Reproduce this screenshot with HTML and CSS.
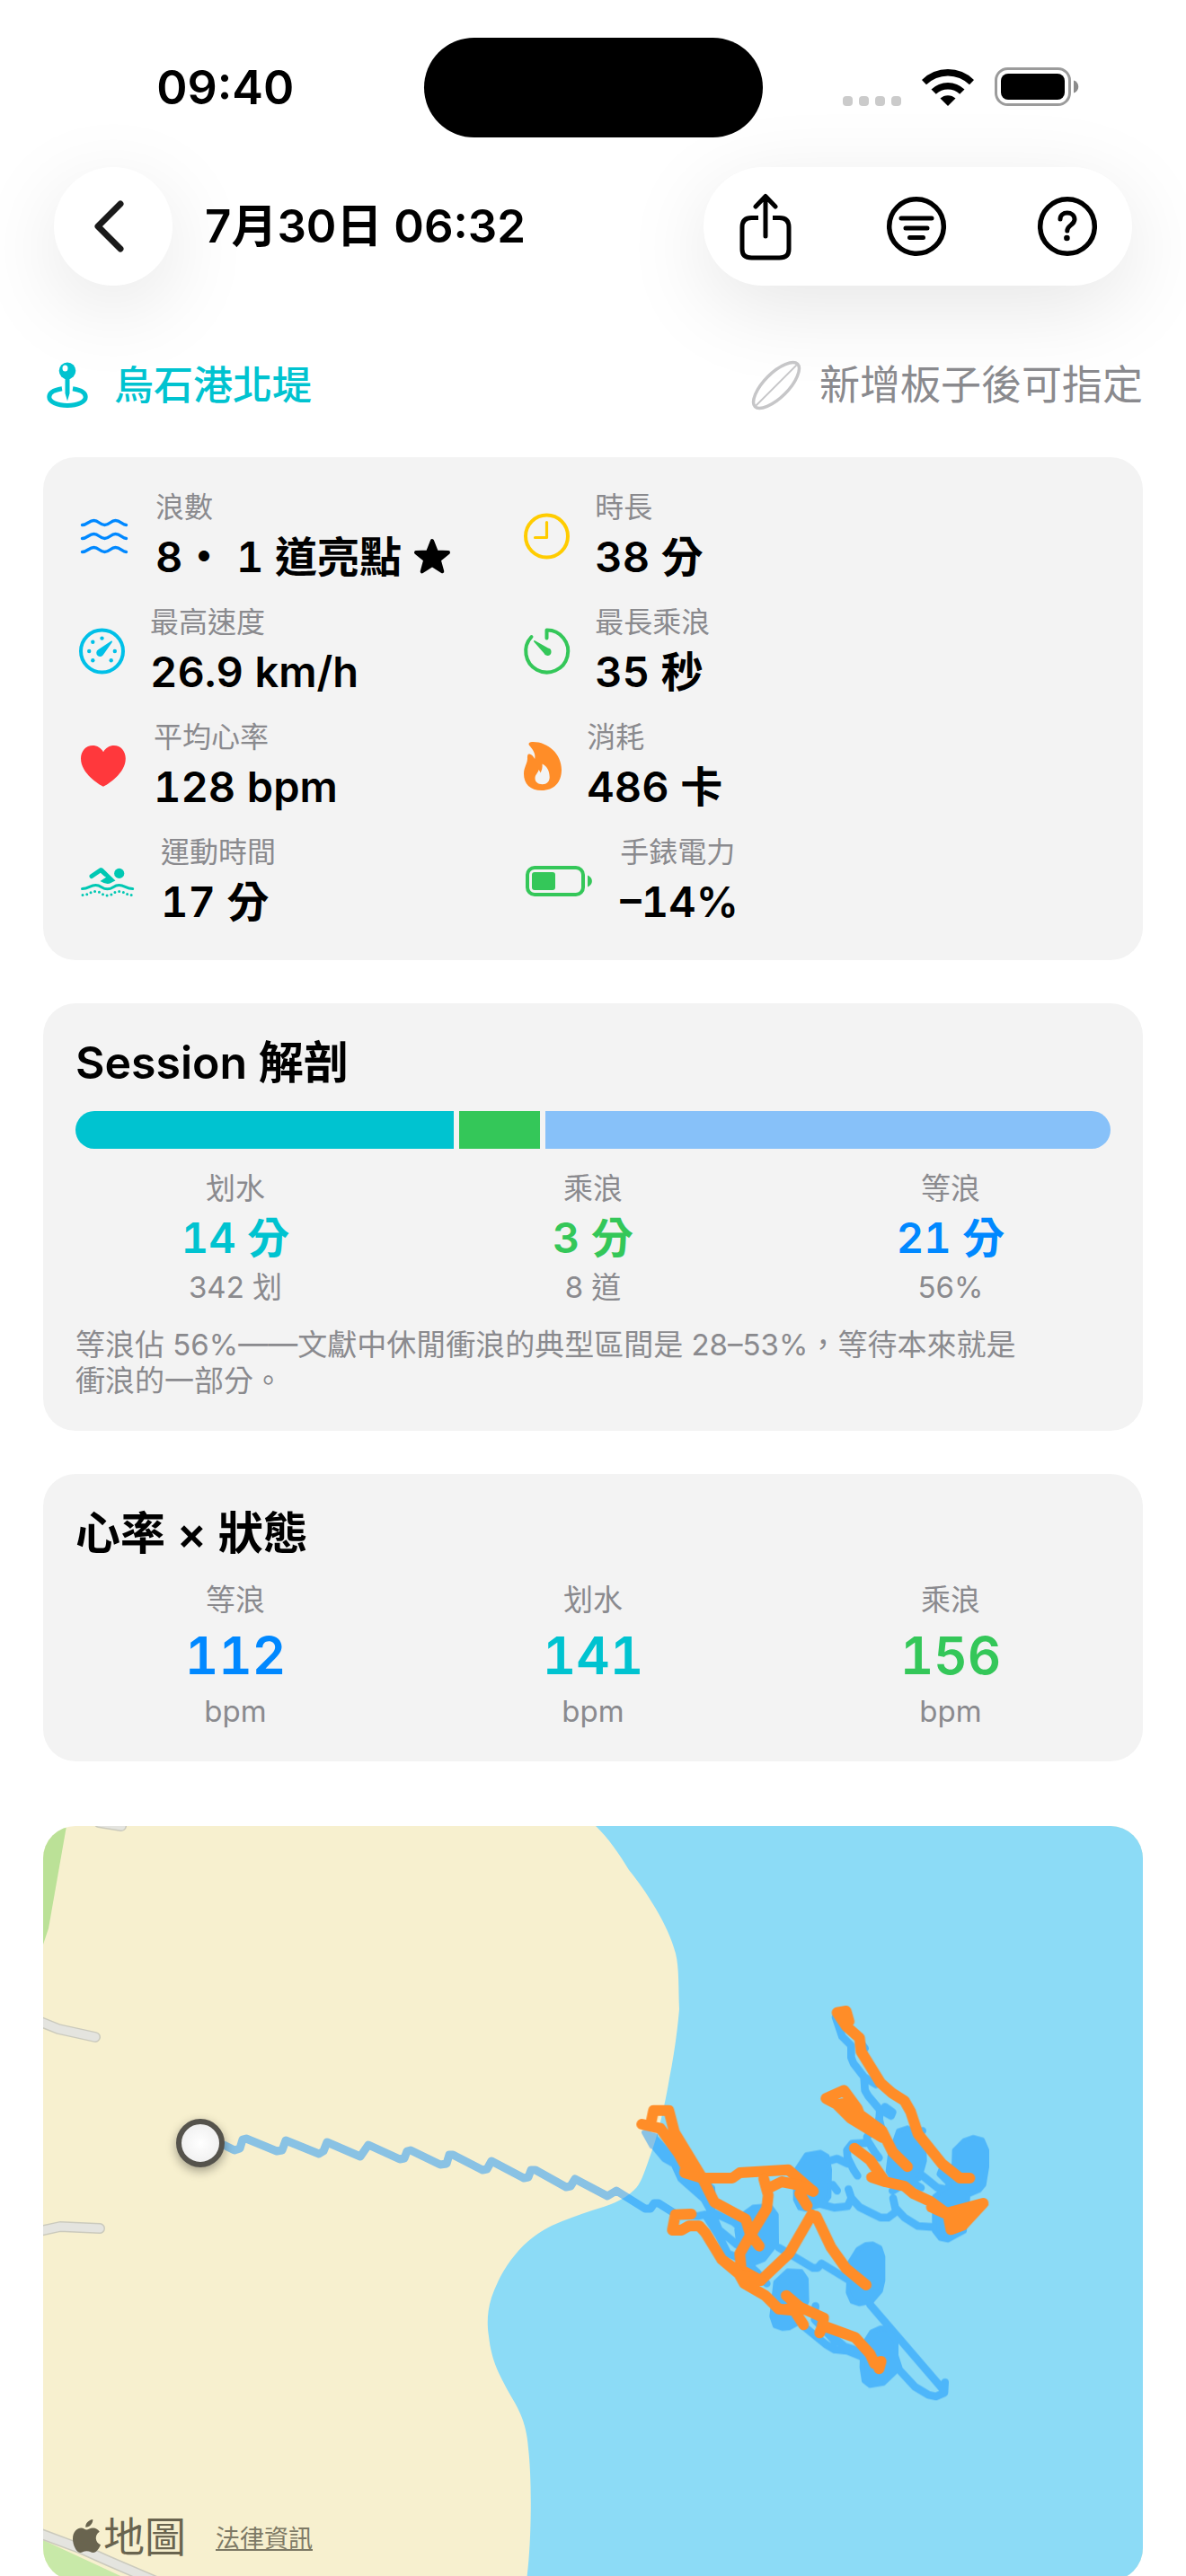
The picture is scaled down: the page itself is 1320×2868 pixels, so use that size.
FILE: index.html
```html
<!DOCTYPE html>
<html lang="zh-Hant">
<head>
<meta charset="utf-8">
<meta name="viewport" content="width=device-width, initial-scale=1">
<title>7月30日 06:32</title>
<link rel="stylesheet" href="styles.css">
</head>
<body>
<div class="screen">
  <div class="status">
    <span class="status-time">09:40</span>
    <span class="island"></span>
    <span class="status-icons">
      <svg width="65" height="42" viewBox="0 0 65 42" fill="#cbcbcb" aria-hidden="true">
        <rect x="0" y="31" width="11" height="11" rx="4"/><rect x="18" y="31" width="11" height="11" rx="4"/><rect x="36" y="31" width="11" height="11" rx="4"/><rect x="54" y="31" width="11" height="11" rx="4"/>
      </svg>
      <svg width="58" height="42" viewBox="0 0 58 42" aria-hidden="true">
        <path d="M0 13a41 41 0 0 1 58 0l-5 5.300a34 34 0 0 0-48 0z"/>
        <path d="M10.500 23.500a26.500 26.500 0 0 1 37 0l-5.300 5.300a19 19 0 0 0-26.400 0z"/>
        <path d="M20.500 33.500a12.500 12.500 0 0 1 17 0L29 42z"/>
      </svg>
      <svg width="94" height="44" viewBox="0 0 94 44" aria-hidden="true">
        <rect x="1.500" y="1.500" width="82" height="40" rx="13" fill="none" stroke="#9b9b9b" stroke-width="3"/>
        <rect x="7" y="7" width="71" height="29" rx="8"/>
        <path d="M88 14.500c7 2 7 12 0 14z" fill="#8b8b8b"/>
      </svg>
    </span>
  </div>

  <header class="header">
    <button class="glass back" type="button" aria-label="返回">
      <svg width="50" height="64" viewBox="0 0 50 64" fill="none" stroke="#1a1a1a" stroke-width="7" stroke-linecap="round" stroke-linejoin="round"><path d="M33 7 8 32l25 25"/></svg>
    </button>
    <h1 class="title">7月30日 06:32</h1>
    <div class="glass tools">
      <button type="button" aria-label="分享">
        <svg width="76" height="76" viewBox="0 0 76 76" fill="none" stroke="#000" stroke-width="5" stroke-linecap="round" stroke-linejoin="round">
          <path d="M30 28.500h-7.500Q12 28.500 12 39v24.500Q12 73 22.500 73h31Q64 73 64 63.500V39q0-10.500-10.500-10.500H46" stroke-linecap="butt"/>
          <path d="M38 49V5M27 16 38 4.500 49 16"/>
        </svg>
      </button>
      <button type="button" aria-label="篩選">
        <svg width="76" height="76" viewBox="0 0 76 76" fill="none" stroke="#000" stroke-width="5" stroke-linecap="round">
          <circle cx="38" cy="38" r="30.300" stroke-width="5.500"/><path d="M21 29h34M26 40h24M30.500 50.500h15"/>
        </svg>
      </button>
      <button type="button" aria-label="說明">
        <svg width="76" height="76" viewBox="0 0 76 76" fill="none" stroke="#000" stroke-width="5" stroke-linecap="round" stroke-linejoin="round">
          <circle cx="38" cy="38" r="30.300" stroke-width="5.500"/><path d="M30 30c0-4.500 3.500-7 7.800-7s8.200 2.600 8.200 7.200c0 6.300-8.200 6.600-8.200 12.800"/><circle cx="37.400" cy="51" r="3.300" fill="#000" stroke="none"/>
        </svg>
      </button>
    </div>
  </header>

  <main class="content">
    <div class="place-row">
      <button class="place" type="button">
        <svg width="50" height="54" viewBox="0 0 50 54" aria-hidden="true">
          <path d="M19 30.800C10 32.200 4.800 35.500 4.800 40c0 5.400 8.700 9.500 20.200 9.500S45.200 45.400 45.200 40c0-4.500-5.200-7.800-14.200-9.200" fill="none" stroke="#00c3d0" stroke-width="5"/>
          <path d="M22.500 19h5v17L25 44.500 22.500 36z" fill="#00c3d0"/><circle cx="25" cy="10.800" r="9.300" fill="#00c3d0"/><ellipse cx="22.500" cy="8" rx="3" ry="3.600" fill="#fff"/>
        </svg>
        <span>烏石港北堤</span>
      </button>
      <button class="board" type="button">
        <svg width="56" height="56" viewBox="0 0 56 56" fill="none" stroke="#c6c6c8" aria-hidden="true">
          <g transform="rotate(45 28 28)"><path d="M28-5.500c7 0 13.500 15 13.500 33.500S35 61.500 28 61.500 14.500 46.500 14.500 28 21-5.500 28-5.500z" stroke-width="3.500"/><path d="M28-4v64" stroke-width="2"/></g>
        </svg>
        <span>新增板子後可指定</span>
      </button>
    </div>

    <section class="card stats">
      <div class="stat">
        <svg width="65" height="60" viewBox="0 0 65 60" fill="none" stroke="#0088ff" stroke-width="3.400" stroke-linecap="round" aria-hidden="true">
          <path d="M7.500 17.500C13 17.500 15 12.500 20.500 12.500S27 17.500 32.500 17.500 39 12.500 44.500 12.500 52 17.500 56.500 17.500"/>
          <path d="M7.500 32.500C13 32.500 15 27.500 20.500 27.500S27 32.500 32.500 32.500 39 27.500 44.500 27.500 52 32.500 56.500 32.500"/>
          <path d="M7.500 47.500C13 47.500 15 42.500 20.500 42.500S27 47.500 32.500 47.500 39 42.500 44.500 42.500 52 47.500 56.500 47.500"/>
        </svg>
        <div class="stat-text"><span class="label">浪數</span>
          <span class="value">8・ 1 道亮點 <svg class="star" width="42" height="42" viewBox="0 0 42 42" aria-hidden="true"><path d="M21 3l4.900 12.500 13.100.6-10.200 8.300 3.500 12.900L21 30 9.700 37.300l3.500-12.900L3 16.100l13.100-.6z" stroke="#000" stroke-width="4" stroke-linejoin="round"/></svg></span></div>
      </div>
      <div class="stat">
        <svg width="59" height="60" viewBox="0 0 59 60" fill="none" stroke="#ffcc00" stroke-linecap="round" stroke-linejoin="round" aria-hidden="true">
          <circle cx="29.500" cy="30" r="23.500" stroke-width="4"/><path d="M29.500 14.500v17H16.500" stroke-width="3.200"/>
        </svg>
        <div class="stat-text"><span class="label">時長</span><span class="value">38 分</span></div>
      </div>
      <div class="stat">
        <svg width="59" height="60" viewBox="0 0 59 60" fill="#00c0e8" aria-hidden="true">
          <circle cx="29.500" cy="30" r="23.500" fill="none" stroke="#00c0e8" stroke-width="4"/>
          <circle cx="29.500" cy="15.600" r="2.200"/><circle cx="19.300" cy="19.800" r="2.200"/><circle cx="15.200" cy="30" r="2.200"/><circle cx="19.300" cy="40.200" r="2.200"/><circle cx="39.700" cy="40.200" r="2.200"/><circle cx="43.800" cy="30" r="2.200"/>
          <path d="M25.300 28.200 39.600 18.700q1.800-.6 1.200 1.200L31.300 33.500a4.200 4.200 0 1 1-6-5.300z"/>
        </svg>
        <div class="stat-text"><span class="label">最高速度</span><span class="value">26.9 km/h</span></div>
      </div>
      <div class="stat">
        <svg width="59" height="60" viewBox="0 0 59 60" fill="none" stroke="#34c759" stroke-width="4" stroke-linecap="round" stroke-linejoin="round" aria-hidden="true">
          <path d="M29.500 15.500v-9A23.500 23.500 0 1 1 12.500 14"/>
          <path d="M15.200 19.400q-.6-1.600 1.200-1.200L31 26.600a4.200 4.200 0 1 1-4.600 5.600z" fill="#34c759" stroke="none"/>
        </svg>
        <div class="stat-text"><span class="label">最長乘浪</span><span class="value">35 秒</span></div>
      </div>
      <div class="stat">
        <svg width="63" height="60" viewBox="0 0 63 60" aria-hidden="true">
          <path d="M31 52.800C27 50.900 6 38.500 6 21.500 6 13 11.900 7 19 7c5.200 0 9.500 2.700 12 7.200C33.500 9.700 37.800 7 43 7c7.100 0 12.800 6 12.800 14.500C55.800 38.500 35 50.900 31 52.800z" fill="#ff383c"/>
        </svg>
        <div class="stat-text"><span class="label">平均心率</span><span class="value">128 bpm</span></div>
      </div>
      <div class="stat">
        <svg width="50" height="60" viewBox="0 0 50 60" aria-hidden="true">
          <path fill="#ff8d28" fill-rule="evenodd" d="M10 6.800C8.600 4.500 10.500 3 14.300 3 31 3 46 16.500 46 34c0 14-8.500 23-22.300 23C11 57 4 49.500 4 38.500c0-7 3.700-11 4-16.500-.2-4 .2-6 2.500-5.500 2.500.6 4.500 3 5.700 5.600C17.500 16 14 11.500 10 6.800zM24.500 27.500c.5 4-.5 7-2 10-.6-1.800-1-2.600-2-3.500-.3 3.500-4 5-4 9.500 0 4 3.300 6.700 8.200 6.700s8-3.200 8-8c0-7-3.200-12.500-8.200-14.700z"/>
        </svg>
        <div class="stat-text"><span class="label">消耗</span><span class="value">486 卡</span></div>
      </div>
      <div class="stat">
        <svg width="71" height="60" viewBox="0 0 71 60" fill="#00c8b3" aria-hidden="true">
          <path d="M18 24.500 28.300 17.500 33 22" fill="none" stroke="#00c8b3" stroke-width="5" stroke-linecap="round" stroke-linejoin="round"/>
          <path d="M30 15.500 44.500 29.500q-3 1-5 2.500-5 2.500-12-2l6.500-4.300-6-5z"/><circle cx="48.700" cy="21.400" r="5.600"/>
          <path d="M7.500 38.500C15 38.500 16 34.600 22.500 34.600S29 38.800 35.500 38.800 42 34.600 48.500 34.600 56 38.500 63.700 38.500" fill="none" stroke="#00c8b3" stroke-width="3" stroke-linecap="round"/>
          <path d="M8 45.600C15 45.600 16 41.500 22.500 41.500S29 45.900 35.500 45.900 42 41.500 48.500 41.500 56 45.600 63.700 45.600" fill="none" stroke="#00c8b3" stroke-width="3" stroke-linecap="round" stroke-dasharray="0 4.800"/>
        </svg>
        <div class="stat-text"><span class="label">運動時間</span><span class="value">17 分</span></div>
      </div>
      <div class="stat">
        <svg width="87" height="60" viewBox="0 0 87 60" fill="#34c759" aria-hidden="true">
          <rect x="8" y="15" width="62" height="30" rx="8" fill="none" stroke="#34c759" stroke-width="4"/><rect x="13" y="20" width="26" height="20" rx="3"/><path d="M75 23.500c6.500 2.500 6.500 10.500 0 13z"/>
        </svg>
        <div class="stat-text"><span class="label">手錶電力</span><span class="value">–14%</span></div>
      </div>
    </section>

    <section class="card">
      <h2 class="card-title">Session 解剖</h2>
      <div class="bar">
        <span class="seg paddle" style="flex-grow:421"></span><span class="seg ride" style="flex-grow:90"></span><span class="seg wait" style="flex-grow:629"></span>
      </div>
      <div class="cols">
        <div class="col"><span class="label">划水</span><span class="value teal">14 分</span><span class="label">342 划</span></div>
        <div class="col"><span class="label">乘浪</span><span class="value green">3 分</span><span class="label">8 道</span></div>
        <div class="col"><span class="label">等浪</span><span class="value blue">21 分</span><span class="label">56%</span></div>
      </div>
      <p class="note">等浪佔 56%——文獻中休閒衝浪的典型區間是 28–53%，等待本來就是<br>衝浪的一部分。</p>
    </section>

    <section class="card">
      <h2 class="card-title">心率 × 狀態</h2>
      <div class="cols">
        <div class="col"><span class="label">等浪</span><span class="big blue">112</span><span class="label">bpm</span></div>
        <div class="col"><span class="label">划水</span><span class="big teal">141</span><span class="label">bpm</span></div>
        <div class="col"><span class="label">乘浪</span><span class="big green">156</span><span class="label">bpm</span></div>
      </div>
    </section>

    <section class="map">
      <svg class="map-canvas" viewBox="48 2034 1224 840" preserveAspectRatio="xMidYMid slice" role="img" aria-label="衝浪軌跡地圖">
        <defs>
          <radialGradient id="pin"><stop offset="0" stop-color="#fff"/><stop offset="1" stop-color="#efefef"/></radialGradient>
          <filter id="soft" x="-50%" y="-50%" width="200%" height="200%"><feGaussianBlur stdDeviation="6"/></filter>
        </defs>
        <rect x="48" y="2034" width="1224" height="840" fill="#f7f0cf"/>
        <path fill="#8cdbf6" d="M662 2033C676 2046 690 2066 700 2083 718 2105 744 2144 752 2176 756 2192 755 2215 756 2238 754 2262 750 2290 745 2315 740 2345 732 2380 723 2403 717 2420 713 2433 706 2439 694 2451 676 2457 659 2462 644 2467 630 2472 614 2479 602 2485 594 2491 587 2497 570 2512 555 2535 547 2559 542 2575 542 2590 544 2602 547 2630 556 2645 566 2664 575 2680 586 2695 588 2727 592 2760 592 2830 586 2874H1272V2033z"/>
        <path fill="#bbe197" d="M48 2034h26L54 2148l-6 18z"/>
        <path fill="#c8e9a8" d="M48 2829l97 45H48z"/>
        <g fill="none" stroke-linecap="round" stroke-linejoin="round">
          <path stroke="#cbcabd" stroke-width="12" d="M40 2250 65 2260 106 2269M40 2486 67 2480 111 2482M110 2030 135 2034M40 2820 91 2839 120 2852 176 2876"/>
          <path stroke="#e4e4df" stroke-width="9" d="M40 2250 65 2260 106 2269M40 2486 67 2480 111 2482M110 2030 135 2034M40 2820 91 2839 120 2852 176 2876"/>
        </g>
        <g opacity=".45" fill="none" stroke="#0088ff" stroke-linejoin="round" stroke-linecap="round">
          <path stroke-width="9" d="M249 2389 261 2395 267 2393 270 2383 274 2382 308 2396 314 2395 318 2384 355 2399 360 2396 364 2386 401 2402 410 2389 445 2405 450 2404 453 2396 457 2395 490 2411 497 2410 500 2400 504 2400 537 2417 542 2416 547 2407 583 2426 588 2425 591 2417 596 2417 630 2436 635 2435 640 2427 676 2446 686 2440 718 2460 724 2460 728 2454 733 2454 752 2466"/>
          <svg x="660" y="2200" width="480" height="500" viewBox="0 0 1440 1500" stroke-width="26" overflow="visible">
            <path d="M180 525 205 570 240 612 272 630 295 680 370 745 395 790 470 825 500 850M200 540 275 620M385 700 398 750 395 790 420 850 480 900 540 930M280 800 350 805 375 800 420 870 450 930 500 950 545 990 580 1030"/>
            <path d="M810 140 832 205 862 235 862 275 870 295 905 340 908 385 920 405 958 450 955 490 915 540 915 560 865 563 848 585 850 610M890 220 908 245M905 340 945 365M960 450 995 470 1000 458 975 440 990 465M955 480 965 520M915 550 940 590 955 610M850 610 870 650 883 670"/>
            <path d="M790 620 815 613 850 630M800 700 815 720M760 765 805 777 850 772 863 745 853 715M863 745 890 775 960 810 985 810 1012 790 1002 745M1012 780 1040 810 1085 838 1145 842M1040 560 1100 520M1000 720 1050 690M1100 670 1150 710 1200 720M1000 650 1095 710"/>
            <path d="M620 910 655 930 735 978 750 978 763 963 860 1022M925 1100 1170 1385 1175 1360 1173 1395 1145 1407 1120 1402 1075 1375 1010 1305M743 1105 740 1130M700 1170 780 1235 805 1250 850 1255 900 1275M780 1190 840 1240 900 1260M740 1150 810 1225"/>
            <g fill="#0088ff" stroke-width="16">
              <path d="M170 525 208 535 196 572z"/>
              <path d="M712 600 760 592 782 605 790 650 788 740 770 765 710 782 690 778 676 750 676 655z"/>
              <path d="M535 775 590 770 612 800 613 895 570 950 520 970 490 930 480 850 500 800z"/>
              <path d="M650 988 695 990 712 1015 714 1090 680 1165 655 1178 632 1180 608 1172 597 1140 610 1025z"/>
              <path d="M885 915 910 900 935 898 958 910 968 940 968 1020 960 1055 930 1090 890 1098 865 1090 852 1060 857 960z"/>
              <path d="M930 1192 960 1178 985 1182 1012 1225 1012 1270 1025 1310 1000 1335 970 1363 925 1371 905 1355 898 1310 900 1240z"/>
              <path d="M1020 520 1050 510 1080 520 1105 560 1107 620 1090 680 1010 700 985 655 992 600z"/>
              <path d="M1240 552 1270 542 1300 550 1315 585 1315 640 1305 700 1290 718 1252 735 1250 760 1240 855 1185 885 1160 880 1140 855 1140 740 1190 700 1155 665 1165 640 1205 640 1207 585z"/>
              <path d="M275 640 370 690 400 710 402 745 365 748 300 690z"/>
            </g>
          </svg>
        </g>
        <svg x="660" y="2200" width="480" height="500" viewBox="0 0 1440 1500" overflow="visible" fill="none" stroke="#ff8d28" stroke-width="36" stroke-linejoin="round" stroke-linecap="round">
          <path d="M815 125 845 120 855 155 835 148zL845 170 890 210 895 255 960 360 1000 395 1040 420 1060 455 1085 530 1165 630 1225 678 1258 678"/>
          <path d="M778 412 838 385 882 445 890 465 965 520 1000 590 1050 640M778 412 812 430 860 478 965 542M830 430 890 480 950 520M850 420 870 460"/>
          <path d="M873 578 925 618 975 690 1040 705 1070 730 1125 755 1180 795 1303 762 1235 835 1195 850 1188 815 1215 825M930 675 975 690M1130 775 1185 800 1240 800"/>
          <path d="M163 498 225 512 285 595 310 640 306 660 365 678 465 678 490 660 652 650 735 722M192 500 202 452 253 452 272 525 365 678 405 758 510 815 525 865 555 905M290 570 340 660"/>
          <path d="M570 680 585 735 580 780 525 870 490 930 495 985 560 1020 655 930 730 800M745 805 795 910 845 980 912 1035M590 710 630 690 680 700 735 722M690 730 715 770"/>
          <path d="M328 798 275 800 265 852 295 852 320 838 355 838 375 860 430 950 480 985 505 1030 575 1070 620 1115 670 1120M430 950 490 1000 560 1020M645 1070 690 1108 770 1145 765 1175 757 1195M665 1110 703 1168M765 1170 875 1210 925 1265 940 1298 962 1290 955 1315M650 1115 690 1108"/>
        </svg>
        <circle cx="223" cy="2391" r="27" fill="#000" opacity=".35" filter="url(#soft)"/>
        <circle cx="223" cy="2387" r="24" fill="url(#pin)" stroke="#55534c" stroke-width="6"/>
      </svg>
      <div class="map-legal">
        <span class="brand">
          <svg width="32" height="38" viewBox="0 0 32 38" fill="#69644f" aria-hidden="true"><path d="M23.300 0c.3 4.600-3.600 8.800-8 8.800C14.700 4.600 18.800.5 23.300 0zM16.200 11.600c1.800 0 4.200-2.200 7.300-2.200 3 0 5.800 1.700 7.300 4.300-6 3.600-5 12 1.200 14.500C30.500 32 27.200 37 23.800 37c-2.800 0-3.800-1.700-7.300-1.700S11.900 37 9.300 37C5 37 1 28.500 1 21.800 1 13.500 6.100 9.600 10.300 9.600c2.500 0 4.500 2 5.900 2z"/></svg>
          地圖
        </span>
        <a href="#">法律資訊</a>
      </div>
    </section>
  </main>
</div>
</body>
</html>
```

FILE: styles.css
```css
* { box-sizing: border-box; }

html, body { margin: 0; height: 100%; }

body {
  background: #fff;
  color: #000;
  font-family: Inter, "Noto Sans CJK TC", sans-serif;
}

h1, h2, p { margin: 0; font-weight: 600; }
svg { display: block; flex: none; }

button {
  margin: 0;
  padding: 0;
  border: 0;
  background: none;
  color: inherit;
  font: inherit;
  cursor: pointer;
}

.screen {
  display: flex;
  flex-direction: column;
  height: 100vh;
  overflow: hidden;
}

/* status bar */
.status {
  display: grid;
  grid-template-columns: 1fr auto 1fr;
  align-items: center;
  flex: none;
  height: 186px;
  padding-top: 8px;
}
.status-time {
  justify-self: center;
  padding: 2px 0 0 30px;
  font-size: 52px;
  line-height: 60px;
  font-weight: 600;
}
.island {
  width: 377px;
  height: 111px;
  border-radius: 56px;
  background: #000;
}
.status-icons {
  display: flex;
  align-items: center;
  justify-self: center;
  gap: 23px;
  padding-right: 30px;
}

/* navigation bar */
.header {
  display: flex;
  align-items: center;
  flex: none;
  padding: 0 60px;
}
.glass {
  height: 132px;
  border-radius: 66px;
  background: #fff;
  box-shadow: 0 24px 96px rgba(0, 0, 0, .1);
}
.back {
  display: flex;
  align-items: center;
  justify-content: center;
  width: 132px;
}
.title {
  flex: 1;
  padding-left: 36px;
  font-size: 51px;
  line-height: 62px;
}
.tools {
  display: flex;
  align-items: center;
  gap: 92px;
  padding: 0 34px 0 31px;
}

.content {
  flex: 1;
  min-height: 0;
  padding: 84px 48px 0;
  overflow: hidden;
}

.place-row {
  display: flex;
  align-items: center;
  justify-content: space-between;
  height: 54px;
  margin-bottom: 53px;
  line-height: 54px;
}
.place, .board {
  display: flex;
  align-items: center;
}
.place {
  gap: 27px;
  padding-left: 2px;
  font-size: 44px;
  font-weight: 500;
  color: #00c3d0;
}
.board {
  gap: 20px;
  font-size: 45px;
  color: #8a8a8e;
}

/* cards */
.card {
  margin-bottom: 48px;
  padding: 36px;
  border-radius: 36px;
  background: #f3f3f3;
}
.card-title {
  margin-bottom: 24px;
  font-size: 50px;
  line-height: 60px;
}
.label {
  font-size: 33px;
  line-height: 40px;
  color: #8a8a8e;
}
.value {
  font-size: 47px;
  line-height: 58px;
  font-weight: 600;
  font-variant-numeric: tabular-nums;
}
.big {
  font-size: 58px;
  line-height: 72px;
  font-weight: 600;
  font-variant-numeric: tabular-nums;
}
.teal { color: #00c3d0; }
.green { color: #34c759; }
.blue { color: #0088ff; }

.stats {
  display: grid;
  grid-template-columns: 43% 1fr;
  row-gap: 24px;
}
.stat {
  display: flex;
  align-items: center;
  gap: 24px;
}
.stat-text {
  display: flex;
  flex-direction: column;
  gap: 6px;
  white-space: nowrap;
}
.stat-text .label { font-size: 32px; }
.star {
  display: inline-block;
  vertical-align: -4px;
}

.bar {
  display: flex;
  gap: 6px;
  height: 42px;
  margin-bottom: 24px;
  border-radius: 21px;
  overflow: hidden;
}
.seg { flex-basis: 0; }
.paddle { background: #00c3d0; }
.ride { background: #34c759; }
.wait { background: #87c1f9; }

.cols {
  display: grid;
  grid-template-columns: repeat(3, 1fr);
  column-gap: 42px;
}
.col {
  display: flex;
  flex-direction: column;
  align-items: center;
  gap: 6px;
}
.note {
  margin-top: 24px;
  font-size: 33px;
  line-height: 40px;
  font-weight: 400;
  color: #8a8a8e;
}

/* map */
.map {
  position: relative;
  height: 840px;
  margin-top: 72px;
  border-radius: 36px;
  overflow: hidden;
}
.map-canvas { width: 100%; height: 100%; }
.map-legal {
  position: absolute;
  left: 32px;
  bottom: 22px;
  display: flex;
  align-items: center;
  gap: 33px;
  color: #69644f;
}
.brand {
  display: flex;
  align-items: center;
  gap: 3px;
  font-size: 46px;
  line-height: 54px;
}
.map-legal a {
  padding-top: 6px;
  font-size: 27px;
  line-height: 36px;
  color: #7d7965;
}
```
